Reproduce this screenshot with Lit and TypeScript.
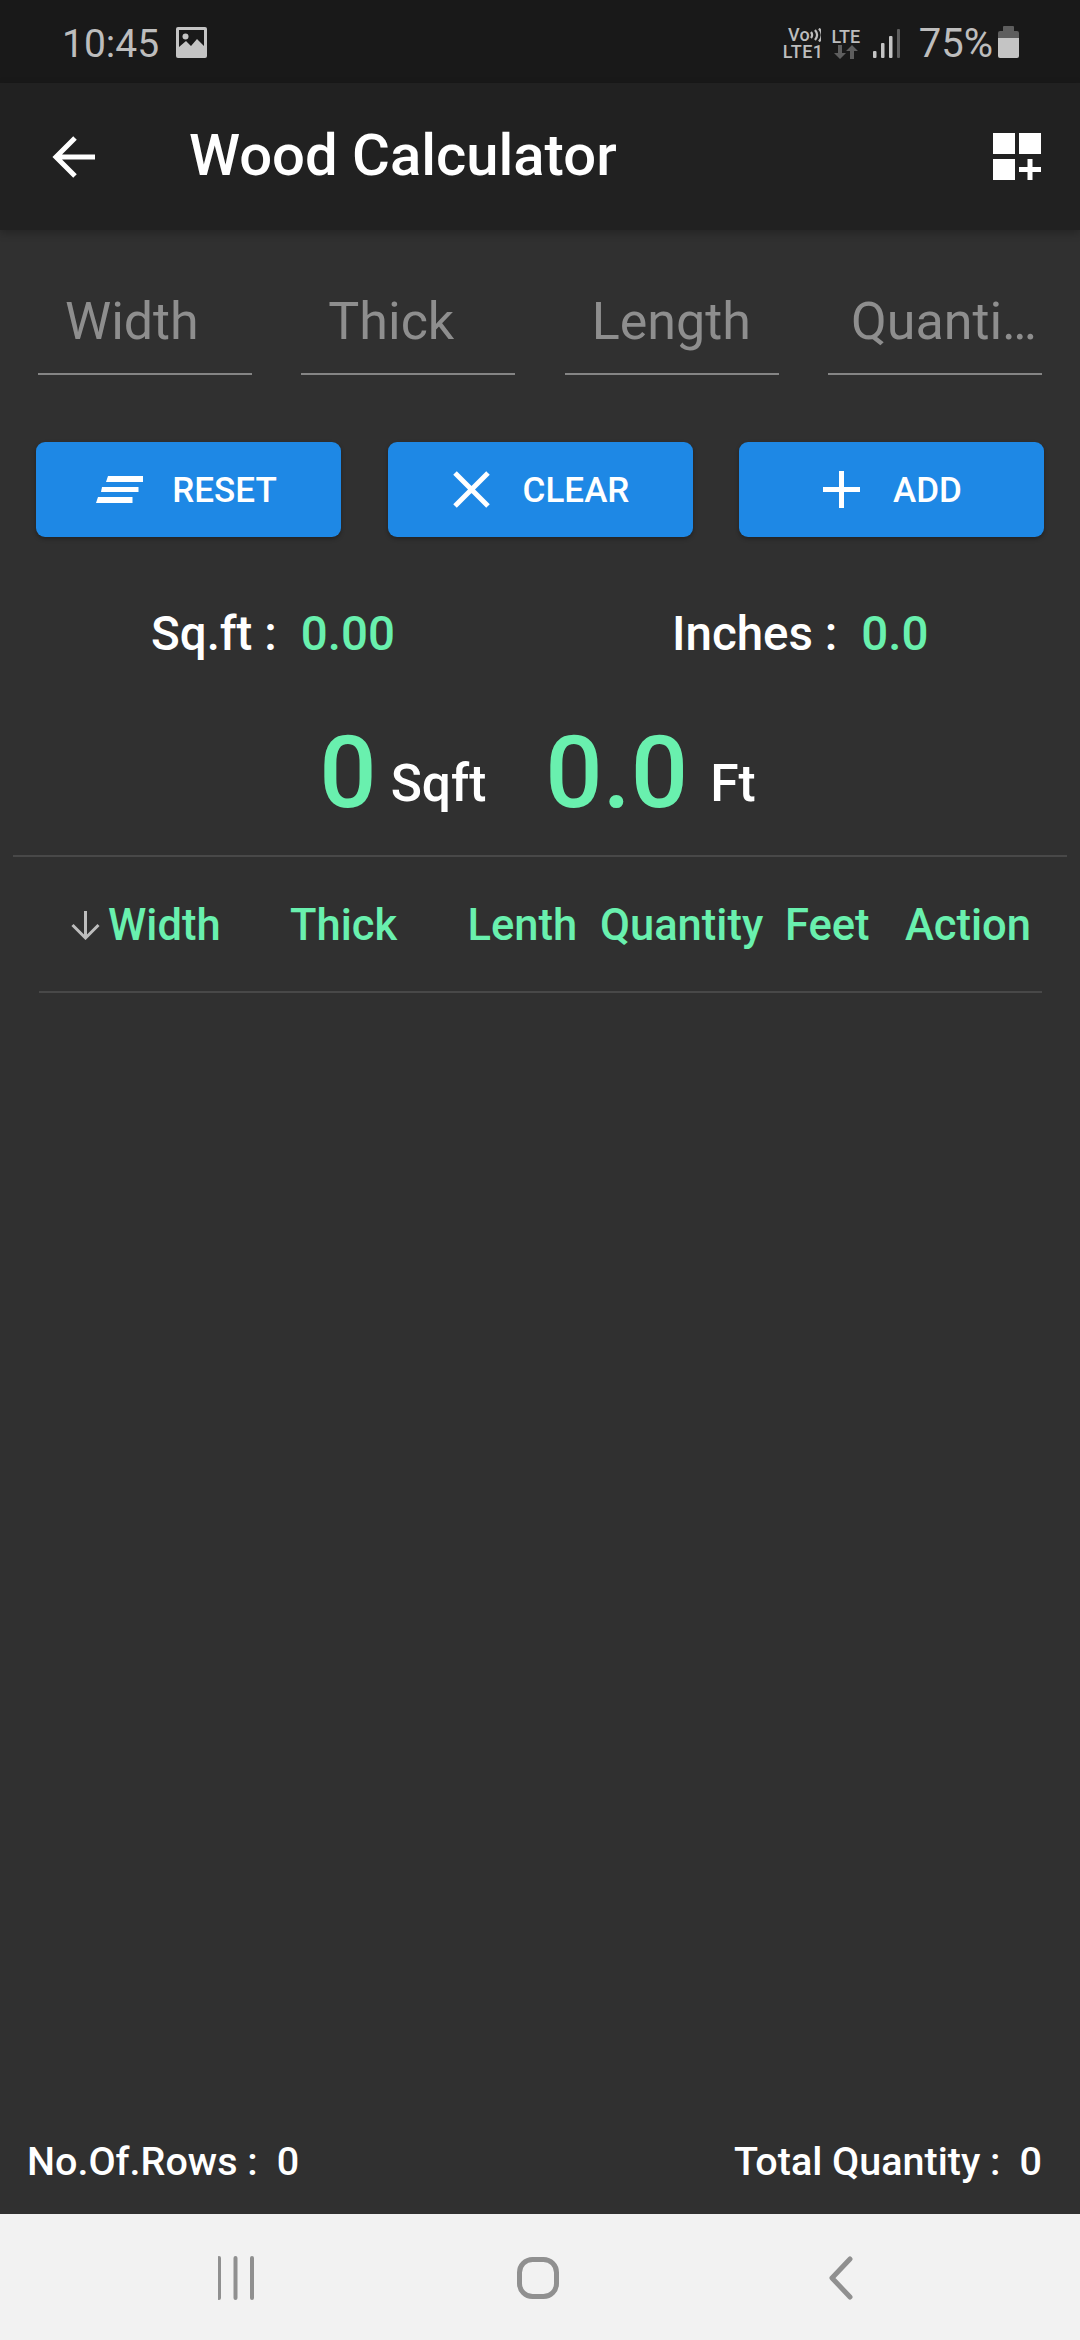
import { LitElement, css, html, svg } from 'lit';
import { customElement } from 'lit/decorators.js';

const FIELDS = ['Width', 'Thick', 'Length', 'Quanti…'];
const COLUMNS = ['Thick', 'Lenth', 'Quantity', 'Feet', 'Action'];

const resetIcon = svg`<svg class="btn-icon reset" width="47" height="27" viewBox="0 0 47 27" fill="#fff">
  <polygon points="12,0 47,0 47,6 10,6" />
  <polygon points="6,11 42.5,11 42.5,16 5,16" />
  <polygon points="2,21 36.5,21 36.5,27 0,27" />
</svg>`;

const clearIcon = svg`<svg class="btn-icon" width="37" height="37" viewBox="0 0 37 37" fill="none" stroke="#fff" stroke-width="5">
  <path d="M2 2 35 35M35 2 2 35" />
</svg>`;

const addIcon = svg`<svg class="btn-icon" width="37" height="37" viewBox="0 0 37 37" fill="none" stroke="#fff" stroke-width="5">
  <path d="M18.5 0V37M0 18.5H37" />
</svg>`;

@customElement('app-root')
export class AppRoot extends LitElement {
  static styles = css`
    :host {
      display: flex;
      flex-direction: column;
      width: 1080px;
      height: 2340px;
      background: #303030;
      font-family: Roboto, 'Liberation Sans', sans-serif;
      color: #fff;
      overflow: hidden;
    }
    .status {
      height: 83px;
      flex: none;
      background: #191919;
      display: flex;
      align-items: center;
      color: #bdbdbd;
      font-size: 39px;
      padding: 4px 61px 0 62px;
      box-sizing: border-box;
    }
    .status .pic {
      margin-left: 17px;
      margin-top: -3px;
    }
    .status .right {
      margin-left: auto;
      display: flex;
      align-items: center;
    }
    .status .pct {
      font-size: 40px;
    }
    .net {
      display: flex;
      flex-direction: column;
      align-items: center;
      font-size: 18px;
      font-weight: 500;
      line-height: 17px;
      margin-top: -1px;
    }
    .net.vo {
      letter-spacing: 0.5px;
      margin-right: 8px;
    }
    .vo-top {
      display: flex;
      align-items: center;
      margin-left: 3px;
    }
    .bars {
      margin-left: 12.5px;
      margin-right: 19px;
    }
    .battery {
      margin-left: 5px;
      margin-top: -3px;
    }
    .appbar {
      height: 147px;
      flex: none;
      background: #212121;
      display: flex;
      align-items: center;
      padding: 0 39px 0 52px;
      box-sizing: border-box;
      box-shadow: 0 3px 8px rgba(0, 0, 0, 0.25);
      position: relative;
    }
    .title {
      margin-left: 94px;
      padding-bottom: 3px;
      font-size: 58px;
      font-weight: 500;
    }
    .appbar .grid {
      margin-left: auto;
    }
    .fields {
      display: grid;
      grid-template-columns: repeat(4, 214px);
      justify-content: space-between;
      padding: 55px 38px 0;
    }
    .field {
      height: 88px;
      border-bottom: 2px solid #858585;
      padding-left: 27px;
      font-size: 52px;
      line-height: 73px;
      color: #8e8e8e;
      white-space: nowrap;
    }
    .field:last-child {
      padding-left: 23px;
    }
    .buttons {
      display: grid;
      grid-template-columns: repeat(3, 305px);
      justify-content: space-between;
      padding: 67px 36px 0;
    }
    .btn {
      height: 95px;
      background: #1e88e5;
      border-radius: 9px;
      box-shadow: 0 2px 4px rgba(0, 0, 0, 0.3);
      display: flex;
      align-items: center;
      justify-content: center;
      gap: 33px;
      padding-left: 2px;
      font-size: 35px;
      font-weight: 500;
    }
    .btn span {
      padding-top: 2px;
    }
    .btn.first {
      padding-left: 0;
      padding-right: 4px;
    }
    .btn-icon.reset {
      margin-right: -4px;
    }
    .stats {
      display: flex;
      padding: 70px 0 0 151px;
      font-size: 47.5px;
      font-weight: 500;
      line-height: 54px;
    }
    .stat {
      display: flex;
      gap: 24px;
    }
    .stat.a {
      flex: none;
      width: 521px;
    }
    .green {
      color: #69f0ae;
    }
    .totals {
      height: 194px;
      box-sizing: border-box;
      padding: 52px 5px 0 0;
      text-align: center;
      font-size: 0;
      font-weight: 500;
      white-space: nowrap;
    }
    .big {
      font-size: 101px;
      line-height: 120px;
      margin-right: 14px;
    }
    .big.second {
      margin-right: 22px;
    }
    .unit {
      font-size: 51.5px;
      vertical-align: 6px;
    }
    .unit.first {
      margin-right: 59px;
    }
    .rule {
      height: 2px;
      flex: none;
      background: #484848;
      margin: 0 13px;
    }
    .thead {
      display: grid;
      grid-template-columns: 219px 177.5px 132.5px 185px 120px 1fr;
      align-items: center;
      height: 134px;
      box-sizing: border-box;
      padding-top: 2px;
      font-size: 43.5px;
      font-weight: 500;
      color: #69f0ae;
      margin-left: 71px;
    }
    .sort {
      display: flex;
      align-items: center;
      gap: 8px;
    }
    .rule.inner {
      margin: 0 38px 0 39px;
    }
    .footer {
      margin-top: auto;
      display: flex;
      justify-content: space-between;
      padding: 0 38px 29px 27px;
      font-size: 39.5px;
      font-weight: 500;
      line-height: 46px;
    }
    .footer .value {
      margin-left: 19px;
    }
    .nav {
      height: 126px;
      flex: none;
      box-sizing: border-box;
      padding-top: 2px;
      background: #f2f2f2;
      display: flex;
      align-items: center;
      justify-content: center;
    }
  `;

  render() {
    return html`
      <div class="status">
        <span>10:45</span>
        <svg class="pic" width="31" height="31" viewBox="0 0 31 31">
          <rect width="31" height="31" rx="2" fill="#c4c4c4" />
          <rect x="3" y="3" width="25" height="25" fill="#191919" />
          <circle cx="9.5" cy="9.5" r="3" fill="#c4c4c4" />
          <path d="M3 20 10 14l5 5 6-7 7 7v9H3z" fill="#c4c4c4" />
        </svg>
        <div class="right">
          <div class="net vo">
            <div class="vo-top">
              <span>Vo</span>
              <svg width="11" height="14" viewBox="0 0 11 14" fill="none" stroke="#bdbdbd" stroke-width="2.2">
                <path d="M1 4c1.500 2 1.500 4 0 6M5 2c2.500 3 2.500 7 0 10M9 0.500c3.500 4 3.500 9 0 13" />
              </svg>
            </div>
            <span>LTE1</span>
          </div>
          <div class="net">
            <span>LTE</span>
            <svg width="24" height="14" viewBox="0 0 24 14" fill="#5e5e5e">
              <path d="M4 0h4v8h4l-6 6-6-6h4zM16 14h4V6h4l-6-6-6 6h4z" />
            </svg>
          </div>
          <svg class="bars" width="27" height="29" viewBox="0 0 27 29">
            <rect x="0" y="22" width="3.5" height="7" rx="1" fill="#c4c4c4" />
            <rect x="8" y="14" width="3.5" height="15" rx="1" fill="#c4c4c4" />
            <rect x="16" y="7" width="3.5" height="22" rx="1" fill="#c4c4c4" />
            <rect x="24" y="0" width="3" height="29" rx="1" fill="#5e5e5e" />
          </svg>
          <span class="pct">75%</span>
          <svg class="battery" width="21" height="32" viewBox="0 0 21 32">
            <path d="M5 1a1 1 0 0 1 1-1h9a1 1 0 0 1 1 1v4h3a2 2 0 0 1 2 2v5H0V7a2 2 0 0 1 2-2h3z" fill="#5e5e5e" />
            <path d="M0 12h21v18a2 2 0 0 1-2 2H2a2 2 0 0 1-2-2z" fill="#c4c4c4" />
          </svg>
        </div>
      </div>

      <div class="appbar">
        <svg width="43" height="42" viewBox="0 0 43 42" fill="none" stroke="#fff" stroke-width="5">
          <path d="M43 21H4M23 2 4 21l19 19" />
        </svg>
        <span class="title">Wood Calculator</span>
        <svg class="grid" width="48" height="47" viewBox="0 0 48 47" fill="#fff">
          <rect width="22" height="21" />
          <rect x="26" width="22" height="21" />
          <rect y="26" width="22" height="21" />
          <path d="M34.500 26h5v8h8.500v5h-8.500v8h-5v-8H26v-5h8.500z" />
        </svg>
      </div>

      <div class="fields">
        ${FIELDS.map((f) => html`<div class="field">${f}</div>`)}
      </div>

      <div class="buttons">
        <div class="btn first">${resetIcon}<span>RESET</span></div>
        <div class="btn">${clearIcon}<span>CLEAR</span></div>
        <div class="btn">${addIcon}<span>ADD</span></div>
      </div>

      <div class="stats">
        <div class="stat a"><span>Sq.ft :</span><span class="green">0.00</span></div>
        <div class="stat"><span>Inches :</span><span class="green">0.0</span></div>
      </div>

      <div class="totals">
        <span class="big green">0</span><span class="unit first">Sqft</span>
        <span class="big second green">0.0</span><span class="unit">Ft</span>
      </div>

      <div class="rule"></div>
      <div class="thead">
        <div class="sort">
          <svg width="29" height="29" viewBox="0 0 29 29" fill="none" stroke="#bdbdbd" stroke-width="3">
            <path d="M14.500 0V27M1.500 14l13 13 13-13" />
          </svg>
          <span>Width</span>
        </div>
        ${COLUMNS.map((c) => html`<span>${c}</span>`)}
      </div>
      <div class="rule inner"></div>

      <div class="footer">
        <div>No.Of.Rows :<span class="value">0</span></div>
        <div>Total Quantity :<span class="value">0</span></div>
      </div>

      <div class="nav">
        <svg width="644" height="44" viewBox="0 0 644 44" fill="none" stroke="#909090">
          <path d="M1 2V42M17.500 2V42M34 2V42" stroke-width="4" stroke-linecap="round" />
          <rect x="301.500" y="3.500" width="37" height="37" rx="13" stroke-width="5" />
          <path d="M632 3 614 22l18 19" stroke-width="5" stroke-linecap="round" stroke-linejoin="round" />
        </svg>
      </div>
    `;
  }
}

declare global {
  interface HTMLElementTagNameMap {
    'app-root': AppRoot;
  }
}
